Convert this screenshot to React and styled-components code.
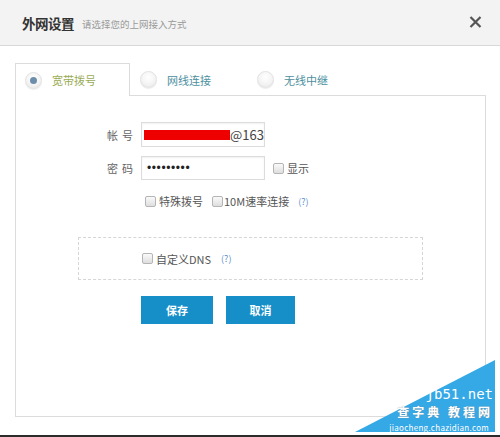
import React from "react";
import styled, { createGlobalStyle } from "styled-components";

const Global = createGlobalStyle`
  html, body { margin: 0; padding: 0; background: #fff; }
  body { font-family: "Noto Sans CJK SC", "Liberation Sans", sans-serif; }
`;

const Page = styled.div`
  position: relative;
  width: 500px;
  height: 437px;
  overflow: hidden;
  background: #fff;
  border-bottom: 2px solid #2b2b2b;
  box-sizing: border-box;
`;

const Header = styled.div`
  height: 46px;
  box-sizing: border-box;
  background: #f3f3f3;
  border-bottom: 1px solid #d8d8d8;
  display: flex;
  align-items: center;
  padding: 0 17px 0 22px;
`;

const Title = styled.span`
  font-size: 13.5px;
  font-weight: bold;
  color: #333;
  letter-spacing: -0.5px;
`;

const Sub = styled.span`
  font-size: 9.5px;
  color: #999;
  margin-left: 8px;
  margin-top: 2px;
`;

const Close = styled.button`
  margin-left: auto;
  border: none;
  background: none;
  padding: 0;
  width: 14px;
  height: 14px;
  display: flex;
`;

const Body = styled.div`
  padding: 17px 14px 0 15px;
`;

const Tabs = styled.div`
  display: flex;
  height: 32px;
`;

const Tab = styled.div`
  width: ${(p) => p.w}px;
  box-sizing: border-box;
  display: flex;
  align-items: center;
  padding-left: 9px;
  gap: 10px;
  font-size: 11px;
  color: ${(p) => (p.active ? "#9aab55" : "#4d8fa0")};
  background: #fff;
  border: 1px solid ${(p) => (p.active ? "#dcdcdc" : "transparent")};
  border-bottom: none;
  height: ${(p) => (p.active ? "33px" : "32px")};
  position: relative;
  z-index: 1;
`;

const Radio = styled.span`
  width: 17px;
  height: 17px;
  border-radius: 50%;
  box-sizing: border-box;
  border: 1px solid #e2e2e2;
  background: radial-gradient(circle at 50% 35%, #ffffff 0%, #f4f4f4 55%, #e4e4e4 100%);
  box-shadow: 0 1px 1px rgba(0, 0, 0, 0.08);
  display: flex;
  align-items: center;
  justify-content: center;
  &::after {
    content: "";
    display: ${(p) => (p.checked ? "block" : "none")};
    width: 7px;
    height: 7px;
    border-radius: 50%;
    background: #6d8eab;
  }
`;

const Panel = styled.div`
  border: 1px solid #dcdcdc;
  height: 322px;
  box-sizing: border-box;
  width: 471px;
  padding-top: 26px;
`;

const Row = styled.div`
  display: flex;
  align-items: center;
  height: ${(p) => p.h || 25}px;
  margin-bottom: ${(p) => p.mb || 0}px;
  padding-left: ${(p) => p.pl || 0}px;
  font-size: 11px;
  color: #555;
`;

const Label = styled.span`
  width: 125px;
  text-align: right;
  padding-right: 4px;
  box-sizing: border-box;
  font-size: 11px;
  color: #666;
  letter-spacing: 4px;
`;

const Field = styled.div`
  width: 124px;
  height: ${(p) => p.h}px;
  box-sizing: border-box;
  border: 1px solid #dcdcdc;
  box-shadow: inset 0 1px 2px rgba(0, 0, 0, 0.06);
  display: flex;
  align-items: center;
  padding-left: 2px;
  font-size: 13px;
  color: #444;
`;

const Redact = styled.span`
  width: 89px;
  height: 10px;
  background: #ee0000;
`;

const Dots = styled.span`
  font-family: "Liberation Sans", sans-serif;
  font-size: 12px;
  letter-spacing: 0.6px;
  padding-left: 3px;
  color: #222;
`;

const Check = styled.span`
  width: 9px;
  height: 9px;
  border: 1px solid #b5b5b5;
  border-radius: 2px;
  background: linear-gradient(#fafafa, #dedede);
  margin-right: ${(p) => p.mr || 3}px;
  margin-left: ${(p) => p.ml || 0}px;
  flex: none;
`;

const Help = styled.span`
  color: #5b8fc9;
  font-size: 9px;
  margin-left: ${(p) => p.ml || 9}px;
`;

const Dashed = styled.div`
  margin: 26px 0 0 62px;
  width: 345px;
  height: 43px;
  box-sizing: border-box;
  border: 1px dashed #d6d6d6;
  display: flex;
  align-items: center;
  padding-left: 63px;
  font-size: 11px;
  color: #555;
`;

const Buttons = styled.div`
  display: flex;
  gap: 13px;
  margin: 16px 0 0 125px;
`;

const Btn = styled.button`
  width: ${(p) => p.w}px;
  height: 28px;
  border: none;
  background: #168fc9;
  color: #fff;
  font-family: inherit;
  font-size: 11px;
  font-weight: bold;
  padding: 0;
`;

const Mark = styled.div`
  position: absolute;
  right: 5px;
  bottom: 3px;
  width: 140px;
  height: 72px;
`;

const MarkShape = styled.div`
  position: absolute;
  inset: 0;
  background: #35a8e6;
  clip-path: polygon(0 100%, 100% 0, 100% 100%);
`;

const MarkText = styled.div`
  position: absolute;
  right: ${(p) => p.r}px;
  bottom: ${(p) => p.b}px;
  color: #fff;
  font-size: ${(p) => p.fs}px;
  line-height: 1;
  font-family: ${(p) => p.ff || "inherit"};
  white-space: nowrap;
  font-weight: ${(p) => p.fw || "normal"};
  text-shadow: ${(p) => p.ts || "none"};
  letter-spacing: ${(p) => p.ls || 0}px;
`;

export default function App() {
  return (
    <Page>
      <Global />
      <Header>
        <Title>外网设置</Title>
        <Sub>请选择您的上网接入方式</Sub>
        <Close>
          <svg width="13" height="12" viewBox="0 0 13 12">
            <path d="M1.5 1 L11.5 11 M11.5 1 L1.5 11" stroke="#555" strokeWidth="2.2" />
          </svg>
        </Close>
      </Header>
      <Body>
        <Tabs>
          <Tab active w={115}>
            <Radio checked />
            宽带拨号
          </Tab>
          <Tab w={117}>
            <Radio />
            网线连接
          </Tab>
          <Tab w={117}>
            <Radio />
            无线中继
          </Tab>
        </Tabs>
        <Panel>
          <Row mb={9}>
            <Label>帐号</Label>
            <Field h={25}>
              <Redact />
              @163
            </Field>
          </Row>
          <Row mb={11} h={24}>
            <Label>密码</Label>
            <Field h={24}>
              <Dots>•••••••••</Dots>
            </Field>
            <Check ml={8} />
            显示
          </Row>
          <Row h={20} pl={129}>
            <Check />
            特殊拨号
            <Check ml={9} mr={1} />
            10M速率连接
            <Help>(?)</Help>
          </Row>
          <Dashed>
            <Check />
            自定义DNS
            <Help ml={10}>(?)</Help>
          </Dashed>
          <Buttons>
            <Btn w={72}>保存</Btn>
            <Btn w={69}>取消</Btn>
          </Buttons>
        </Panel>
      </Body>
      <Mark>
        <MarkShape />
        <MarkText r={2} b={31} fs={14} ff='"DejaVu Sans Mono", monospace'>
          jb51.net
        </MarkText>
        <MarkText r={2} b={14} fs={12} fw="bold" ls={3} ts="0 0 1px #888">
          查字典 教程网
        </MarkText>
        <MarkText r={6} b={0} fs={8} ls={0.3}>
          jiaocheng.chazidian.com
        </MarkText>
      </Mark>
    </Page>
  );
}
